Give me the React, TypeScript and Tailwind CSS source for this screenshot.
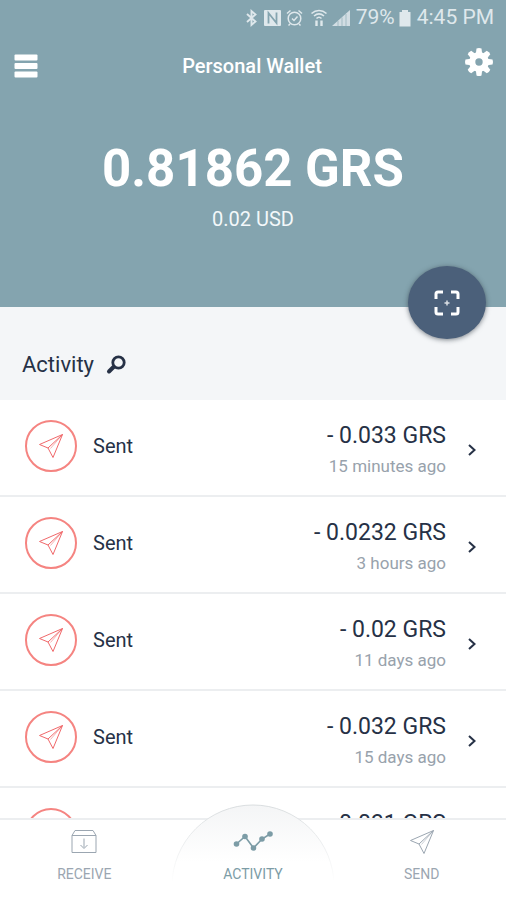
import { useState } from 'react'

const transactions = [
  { id: 1, type: 'Sent', amount: '- 0.033 GRS', time: '15 minutes ago' },
  { id: 2, type: 'Sent', amount: '- 0.0232 GRS', time: '3 hours ago' },
  { id: 3, type: 'Sent', amount: '- 0.02 GRS', time: '11 days ago' },
  { id: 4, type: 'Sent', amount: '- 0.032 GRS', time: '15 days ago' },
  { id: 5, type: 'Sent', amount: '- 0.031 GRS', time: '16 days ago' },
]

const gearTeeth = [0, 45, 90, 135, 180, 225, 270, 315]

function PlaneIcon({ className }: { className: string }) {
  return (
    <svg viewBox="0 0 26 26" fill="none" stroke="currentColor" strokeLinejoin="round" className={className}>
      <path d="M24.5 1.5 1.5 11.5 10 15 15 24.5Z" />
      <path d="M24.5 1.5 10 15" />
      <path d="M24.5 1.5 12.5 15.5" strokeOpacity="0.5" />
    </svg>
  )
}

function StatusBar() {
  return (
    <div className="flex h-9 items-center justify-end pr-3 text-[21px] text-[#dfe8ec]">
      <svg width="112" height="20" viewBox="0 0 112 20" fill="none" stroke="currentColor" strokeWidth="1.5">
        {/* bluetooth */}
        <path d="M3 6 11.500 13.500 7.500 17V3l4 3.500L3 14" strokeWidth="1.900" />
        {/* nfc */}
        <rect x="20" y="2" width="17" height="16" rx="1" fill="currentColor" stroke="none" />
        <path d="M24.500 15.500V5L32.500 15V4.500" stroke="#84a4af" strokeWidth="1.800" />
        {/* alarm */}
        <circle cx="50.500" cy="10.500" r="6.300" />
        <path d="M48 10.500l2 2 3.500-4M43 5.500l3.500-3M58 5.500l-3.500-3M46 16l-1.500 1.500M55 16l1.500 1.500" />
        {/* wifi with traffic arrows */}
        <path d="M67.500 5.500c4.500-4 10.500-4 15 0M70 8c3-2.500 7-2.500 10 0M72.500 10.500c1.500-1.500 3.500-1.500 5 0" strokeWidth="1.600" />
        <path d="M72.500 12.500V18M77.500 12.500V18" strokeWidth="2.400" />
        {/* signal */}
        <path d="M88 18 106 2V18Z" fill="currentColor" stroke="none" fillOpacity="0.85" />
        <path d="M94 18v-5M98 18V9.500M102 18V6" stroke="#84a4af" strokeWidth="0.600" />
      </svg>
      <span>79%</span>
      <svg width="12" height="18" viewBox="0 0 12 18" fill="currentColor" className="mr-1.5 ml-1">
        <path d="M3 1h6V3h2.500v14.500H0.500V3H3Z" />
      </svg>
      <span>4:45 PM</span>
    </div>
  )
}

function Tab({ label, active, onClick, children }: { label: string; active: boolean; onClick: () => void; children: React.ReactNode }) {
  return (
    <button
      onClick={onClick}
      aria-current={active ? 'page' : undefined}
      className={`relative flex flex-1 flex-col items-center gap-2 pt-2 text-sm ${active ? 'text-[#7c9ca6]' : 'text-[#9ba6b1]'}`}
    >
      {children}
      {label}
    </button>
  )
}

export default function App() {
  const [tab, setTab] = useState('activity')

  return (
    <div className="flex h-screen flex-col bg-white font-[Roboto,sans-serif] text-[#263146]">
      <header className="relative h-[307px] shrink-0 bg-[#84a4af] text-white">
        <StatusBar />
        <div className="flex h-[60px] items-center justify-between px-3">
          <button aria-label="Menu" className="flex w-7 justify-center">
            <svg width="24" height="24" viewBox="0 0 24 24" fill="currentColor">
              <rect x="0.500" y="0.500" width="23" height="6" rx="1" />
              <rect x="0.500" y="9" width="23" height="6" rx="1" />
              <rect x="0.500" y="17.500" width="23" height="6" rx="1" />
            </svg>
          </button>
          <h1 className="text-xl font-medium">Personal Wallet</h1>
          <button aria-label="Settings" className="pb-2">
            <svg width="30" height="30" viewBox="-15 -15 30 30">
              {gearTeeth.map((a) => (
                <path key={a} d="M-3.200 -8 -2.500 -13.500Q0 -14.500 2.500 -13.500L3.200 -8Z" fill="currentColor" transform={`rotate(${a})`} />
              ))}
              <circle r="6.800" fill="none" stroke="currentColor" strokeWidth="6.200" />
            </svg>
          </button>
        </div>
        <div className="pt-[43px] text-center">
          <p className="text-[51px] leading-[60px] font-bold">0.81862 GRS</p>
          <p className="mt-1.5 text-xl leading-7 text-[#f3f8fa]">0.02 USD</p>
        </div>
        <button
          aria-label="Scan code"
          className="absolute right-5 -bottom-8 flex h-[73px] w-[78px] items-center justify-center rounded-[50%] bg-[#4b607a] shadow-[0_1px_5px_rgba(40,50,60,0.6)]"
        >
          <svg width="26" height="26" viewBox="0 0 26 26" fill="none" stroke="currentColor" strokeWidth="3">
            <path d="M2 9V4Q2 2 4 2H9M17 2h5q2 0 2 2v5M24 17v5q0 2-2 2h-5M9 24H4q-2 0-2-2v-5" />
            <path d="M13 10.500v5M10.500 13h5" strokeWidth="1.500" strokeOpacity="0.800" />
          </svg>
        </button>
      </header>

      <div className="flex h-[93px] shrink-0 items-center gap-3 bg-[#f4f6f8] px-[22px] pt-[22px]">
        <h2 className="text-[22px] leading-none">Activity</h2>
        <button aria-label="Search activity">
          <svg width="20" height="20" viewBox="0 0 20 20" fill="none" stroke="currentColor">
            <circle cx="12.500" cy="7.500" r="5.700" strokeWidth="2.800" />
            <path d="M7.500 12 3 16.500" strokeWidth="4" strokeLinecap="round" />
          </svg>
        </button>
      </div>

      <ul className="min-h-0 flex-1 overflow-y-auto [scrollbar-width:none]">
        {transactions.map((t) => (
          <li key={t.id} className="border-b-2 border-[#eceef0]">
            <button className="flex h-[95px] w-full items-center pr-[30px] pl-[25px] text-left">
              <span className="flex items-center gap-4 pb-1">
                <span className="flex size-[52px] items-center justify-center rounded-full border-2 border-[#f58481] text-[#f0686a]">
                  <PlaneIcon className="size-[26px]" />
                </span>
                <span className="text-xl">{t.type}</span>
              </span>
              <span className="ml-auto flex flex-col pt-1 text-right">
                <span className="text-[23px] leading-8">{t.amount}</span>
                <span className="text-[17px] leading-7 text-[#98a2ac]">{t.time}</span>
              </span>
              <svg width="8" height="12" viewBox="0 0 8 12" fill="none" stroke="currentColor" strokeWidth="2" className="mt-1 ml-[22px]">
                <path d="M1 1 6.500 6 1 11" />
              </svg>
            </button>
          </li>
        ))}
      </ul>

      <nav className="relative flex h-[82px] shrink-0 border-t-2 border-[#eceef0] bg-white">
        {/* dome behind the middle tab, fading out towards the bottom */}
        <svg width="164" height="96" viewBox="0 0 164 96" className="absolute bottom-0 left-1/2 -translate-x-1/2">
          <defs>
            <linearGradient id="dome" x1="0" y1="0" x2="0" y2="1">
              <stop offset="0" stopColor="#f4f5f6" />
              <stop offset="0.600" stopColor="#ffffff" />
            </linearGradient>
            <linearGradient id="rim" x1="0" y1="0" x2="0" y2="1">
              <stop offset="0" stopColor="#d9dddf" />
              <stop offset="0.950" stopColor="#ffffff" />
            </linearGradient>
          </defs>
          <path d="M1 96V82A81 81 0 0 1 163 82V96Z" fill="url(#dome)" />
          <path d="M1 82A81 81 0 0 1 163 82" fill="none" stroke="url(#rim)" />
        </svg>
        <Tab label="RECEIVE" active={tab === 'receive'} onClick={() => setTab('receive')}>
          <svg width="26" height="28" viewBox="0 0 26 28" fill="none" stroke="currentColor">
            <path d="M1 7.500H25V24.500H1ZM1 7.500 4 2.500H22L25 7.500" />
            <path d="M13 10.500v9M9.500 17 13 20.500l3.500-3.500" />
          </svg>
        </Tab>
        <Tab label="ACTIVITY" active={tab === 'activity'} onClick={() => setTab('activity')}>
          <svg width="40" height="28" viewBox="0 0 40 28" fill="currentColor">
            <path d="M3.500 16 12 8.500 20.500 20 29 11 37 6" fill="none" stroke="currentColor" strokeWidth="1.600" />
            <circle cx="3.500" cy="16" r="2.800" />
            <circle cx="12" cy="8.500" r="2.800" />
            <circle cx="20.500" cy="20" r="2.800" />
            <circle cx="29" cy="11" r="2.800" />
            <circle cx="37" cy="6" r="2.800" />
          </svg>
        </Tab>
        <Tab label="SEND" active={tab === 'send'} onClick={() => setTab('send')}>
          <PlaneIcon className="h-7 w-[26px]" />
        </Tab>
      </nav>
    </div>
  )
}
